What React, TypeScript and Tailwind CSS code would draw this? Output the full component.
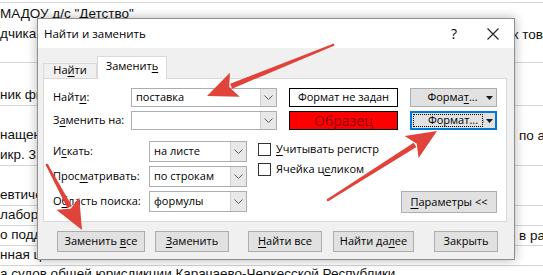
import React from "react";

function Chevron() {
  return (
    <svg width="9" height="5" viewBox="0 0 9 5">
      <path d="M0.5 0.5 L4.5 4.5 L8.5 0.5" fill="none" stroke="#5a5a5a" strokeWidth="1" />
    </svg>
  );
}

function DropTriangle() {
  return (
    <svg width="7" height="4" viewBox="0 0 7 4">
      <path d="M0 0 H7 L3.5 4 Z" fill="#1a1a1a" />
    </svg>
  );
}

function Combo({ value, className }: { value?: string; className: string }) {
  return (
    <div className={`flex border border-[#abadb3] bg-white ${className}`}>
      <div className="flex flex-1 items-center pl-[4px]">{value}</div>
      <div className="flex w-[16px] items-center justify-center border-l border-[#d0d0d0] bg-[#e8e8e8]">
        <Chevron />
      </div>
    </div>
  );
}

function Btn({ children, className }: { children: React.ReactNode; className: string }) {
  return (
    <div
      className={`flex h-[21px] items-center justify-center border border-[#adadad] bg-[#e1e1e1] ${className}`}
    >
      {children}
    </div>
  );
}

function Checkbox({ children }: { children: React.ReactNode }) {
  return (
    <div className="flex h-[19px] items-center gap-[5px]">
      <div className="size-[13px] border border-[#333] bg-white" />
      <span>{children}</span>
    </div>
  );
}

// rows of the sheet behind the dialog; most of each text is hidden by the dialog
const rows = [
  { h: "h-[3px]", left: [""], right: "", rpad: "" },
  {
    h: "h-[60px]",
    left: ["МАДОУ д/с \"Детство\"", "дчика, поставщика"],
    right: "ок товаров",
    rpad: "pl-[505px] pt-[22px]",
    top: true,
  },
  { h: "h-[43px]", left: ["ник финансирования"], right: "", rpad: "" },
  { h: "h-[60px]", left: ["нащение", "икр. 3, ул. Мира"], right: "по адресу", rpad: "pl-[519px] pt-[20px]" },
  { h: "h-[40px]", left: ["евтические"], right: "", rpad: "" },
  { h: "h-[20px]", left: ["лабораторное"], right: "", rpad: "" },
  { h: "h-[20px]", left: ["о поддержке"], right: "в рамках", rpad: "pl-[519px]" },
  { h: "h-[20px]", left: ["нная цена"], right: "", rpad: "" },
];

function Sheet() {
  return (
    <div className="flex flex-col font-['Liberation_Sans',Arial,sans-serif] text-[13.5px] text-[#111]">
      {rows.map((r, i) => (
        <div key={i} className={`relative flex shrink-0 border-b border-[#d4d4d4] ${r.h}`}>
          <div
            className={`flex w-[505px] shrink-0 flex-col overflow-hidden whitespace-nowrap leading-[20px] ${
              r.top ? "justify-start pt-[1px]" : "justify-end"
            }`}
          >
            {r.left.map((t, j) => (
              <div key={j}>{t}</div>
            ))}
          </div>
          {r.right && (
            <div className={`absolute inset-0 whitespace-nowrap leading-[20px] ${r.rpad}`}>{r.right}</div>
          )}
        </div>
      ))}
      <div className="whitespace-nowrap leading-[16px]">а судов общей юрисдикции Карачаево-Черкесской Республики</div>
    </div>
  );
}

function Arrows() {
  const arrows = [
    { x1: 333, y1: 45, tip: [207, 96] },
    { x1: 328, y1: 200, tip: [437, 131] },
    { x1: 47, y1: 165, tip: [82, 230] },
  ];
  return (
    <svg className="pointer-events-none absolute left-0 top-0" width="543" height="275">
      {arrows.map((a, i) => {
        const dx = a.tip[0] - a.x1;
        const dy = a.tip[1] - a.y1;
        const len = Math.hypot(dx, dy);
        const ux = dx / len;
        const uy = dy / len;
        const hl = 30;
        const hw = 13;
        const bx = a.tip[0] - ux * hl;
        const by = a.tip[1] - uy * hl;
        const nx = -uy;
        const ny = ux;
        const head = `${a.tip[0]},${a.tip[1]} ${bx + nx * hw},${by + ny * hw} ${bx + ux * 6},${by + uy * 6} ${bx - nx * hw},${by - ny * hw}`;
        const sx = bx + ux * 4;
        const sy = by + uy * 4;
        const shaft = `${a.x1 + nx * 1.2},${a.y1 + ny * 1.2} ${sx + nx * 2.6},${sy + ny * 2.6} ${sx - nx * 2.6},${sy - ny * 2.6} ${a.x1 - nx * 1.2},${a.y1 - ny * 1.2}`;
        return (
          <g key={i} fill="#e0433a">
            <polygon points={shaft} />
            <circle cx={a.x1} cy={a.y1} r="1.3" />
            <polygon points={head} />
          </g>
        );
      })}
    </svg>
  );
}

function Dialog() {
  return (
    <div className="absolute left-[37px] top-[18px] flex h-[242px] w-[478px] flex-col border border-[#8f8f8f] bg-[#f0f0f0] font-['Open_Sans','Segoe_UI',sans-serif] text-[11px] text-black shadow-[0_0_10px_rgba(0,0,0,0.3)]">
      {/* title */}
      <div className="flex h-[29px] shrink-0 items-center bg-white pl-[6px]">
        <span className="text-[11.5px]">Найти и заменить</span>
        <span className="ml-auto mr-[30px] text-[14px]">?</span>
        <svg className="mr-[15px]" width="12" height="12" viewBox="0 0 12 12">
          <path d="M0.5 0.5 L11.5 11.5 M11.5 0.5 L0.5 11.5" stroke="#222" strokeWidth="1.1" />
        </svg>
      </div>

      <div className="flex flex-1 flex-col pl-[5px] pr-[7px]">
        {/* tabs */}
        <div className="relative z-10 flex h-[30px] items-end pt-[8px]">
          <div className="flex h-[15px] w-[54px] items-center justify-center border border-b-0 border-[#d9d9d9] pb-[1px]">
            На<span className="underline underline-offset-2">й</span>ти
          </div>
          <div className="-mb-px flex h-[23px] w-[70px] items-center justify-center border border-b-0 border-[#d9d9d9] bg-white pb-[3px]">
            Замени<span>т</span>
            <span className="underline underline-offset-2">ь</span>
          </div>
        </div>

        {/* panel */}
        <div className="flex h-[144px] flex-col border border-[#d9d9d9] bg-white pl-[9px] pr-[9px] pt-[9px]">
          <div className="flex h-[19px] items-center">
            <span className="w-[78px]">
              Найт<span className="underline underline-offset-2">и</span>:
            </span>
            <Combo value="поставка" className="h-[19px] w-[146px]" />
            <div className="ml-[12px] flex h-[19px] w-[109px] items-center justify-center border border-black bg-white">
              Формат не задан
            </div>
            <div className="ml-[12px] flex h-[19px] w-[87px] items-center border border-[#adadad] bg-[#e1e1e1]">
              <span className="flex-1 pl-[12px] text-center">
                Форма<span className="underline underline-offset-2">т</span>...
              </span>
              <span className="flex w-[14px] items-center justify-center">
                <DropTriangle />
              </span>
            </div>
          </div>

          <div className="mt-[4px] flex h-[19px] items-center">
            <span className="w-[78px]">
              З<span className="underline underline-offset-2">а</span>менить на:
            </span>
            <Combo className="h-[19px] w-[146px]" />
            <div className="ml-[12px] flex h-[19px] w-[109px] items-center justify-center border border-black bg-[#ff0000] text-[14px] text-[#8a0000]">
              Образец
            </div>
            <div className="ml-[12px] flex h-[19px] w-[87px] items-center border-2 border-[#0078d7] bg-[#e1e1e1] p-[1px]">
              <span className="flex h-full flex-1 items-center justify-center border border-dotted border-black pl-[10px]">
                Формат...
              </span>
              <span className="flex w-[11px] items-center justify-center border-l border-[#adadad]">
                <DropTriangle />
              </span>
            </div>
          </div>

          <div className="mt-[11px] flex">
            <div className="flex flex-col gap-[4px]">
              <div className="flex h-[21px] items-center">
                <span className="w-[96px]">
                  И<span className="underline underline-offset-2">с</span>кать:
                </span>
                <Combo value="на листе" className="h-[21px] w-[98px]" />
              </div>
              <div className="flex h-[21px] items-center">
                <span className="w-[96px]">
                  Прос<span className="underline underline-offset-2">м</span>атривать:
                </span>
                <Combo value="по строкам" className="h-[21px] w-[98px]" />
              </div>
              <div className="flex h-[21px] items-center">
                <span className="w-[96px]">
                  О<span className="underline underline-offset-2">б</span>ласть поиска:
                </span>
                <Combo value="формулы" className="h-[21px] w-[98px]" />
              </div>
            </div>
            <div className="ml-[11px] mt-[-1px] flex flex-col gap-[1px]">
              <Checkbox>
                <span className="underline underline-offset-2">У</span>читывать регистр
              </Checkbox>
              <Checkbox>
                Ячейка ц<span className="underline underline-offset-2">е</span>ликом
              </Checkbox>
            </div>
            <Btn className="mb-[-1px] ml-auto h-[22px] w-[96px] self-end">
              <span>
                <span className="underline underline-offset-2">П</span>араметры &lt;&lt;
              </span>
            </Btn>
          </div>
        </div>

        {/* buttons */}
        <div className="mt-[9px] flex pl-[14px]">
          <Btn className="w-[88px]">
            <span>
              Заменить <span className="underline underline-offset-2">в</span>се
            </span>
          </Btn>
          <Btn className="ml-[10px] w-[74px]">
            <span>
              <span className="underline underline-offset-2">З</span>аменить
            </span>
          </Btn>
          <Btn className="ml-[19px] w-[74px]">
            <span>
              <span className="underline underline-offset-2">Н</span>айти все
            </span>
          </Btn>
          <Btn className="ml-[11px] w-[81px]">
            <span>
              Найти да<span className="underline underline-offset-2">л</span>ее
            </span>
          </Btn>
          <Btn className="ml-[20px] w-[64px]">Закрыть</Btn>
        </div>
      </div>
    </div>
  );
}

export default function App() {
  return (
    <div className="relative h-[275px] w-[543px] overflow-hidden bg-white">
      <Sheet />
      <Dialog />
      <Arrows />
    </div>
  );
}
